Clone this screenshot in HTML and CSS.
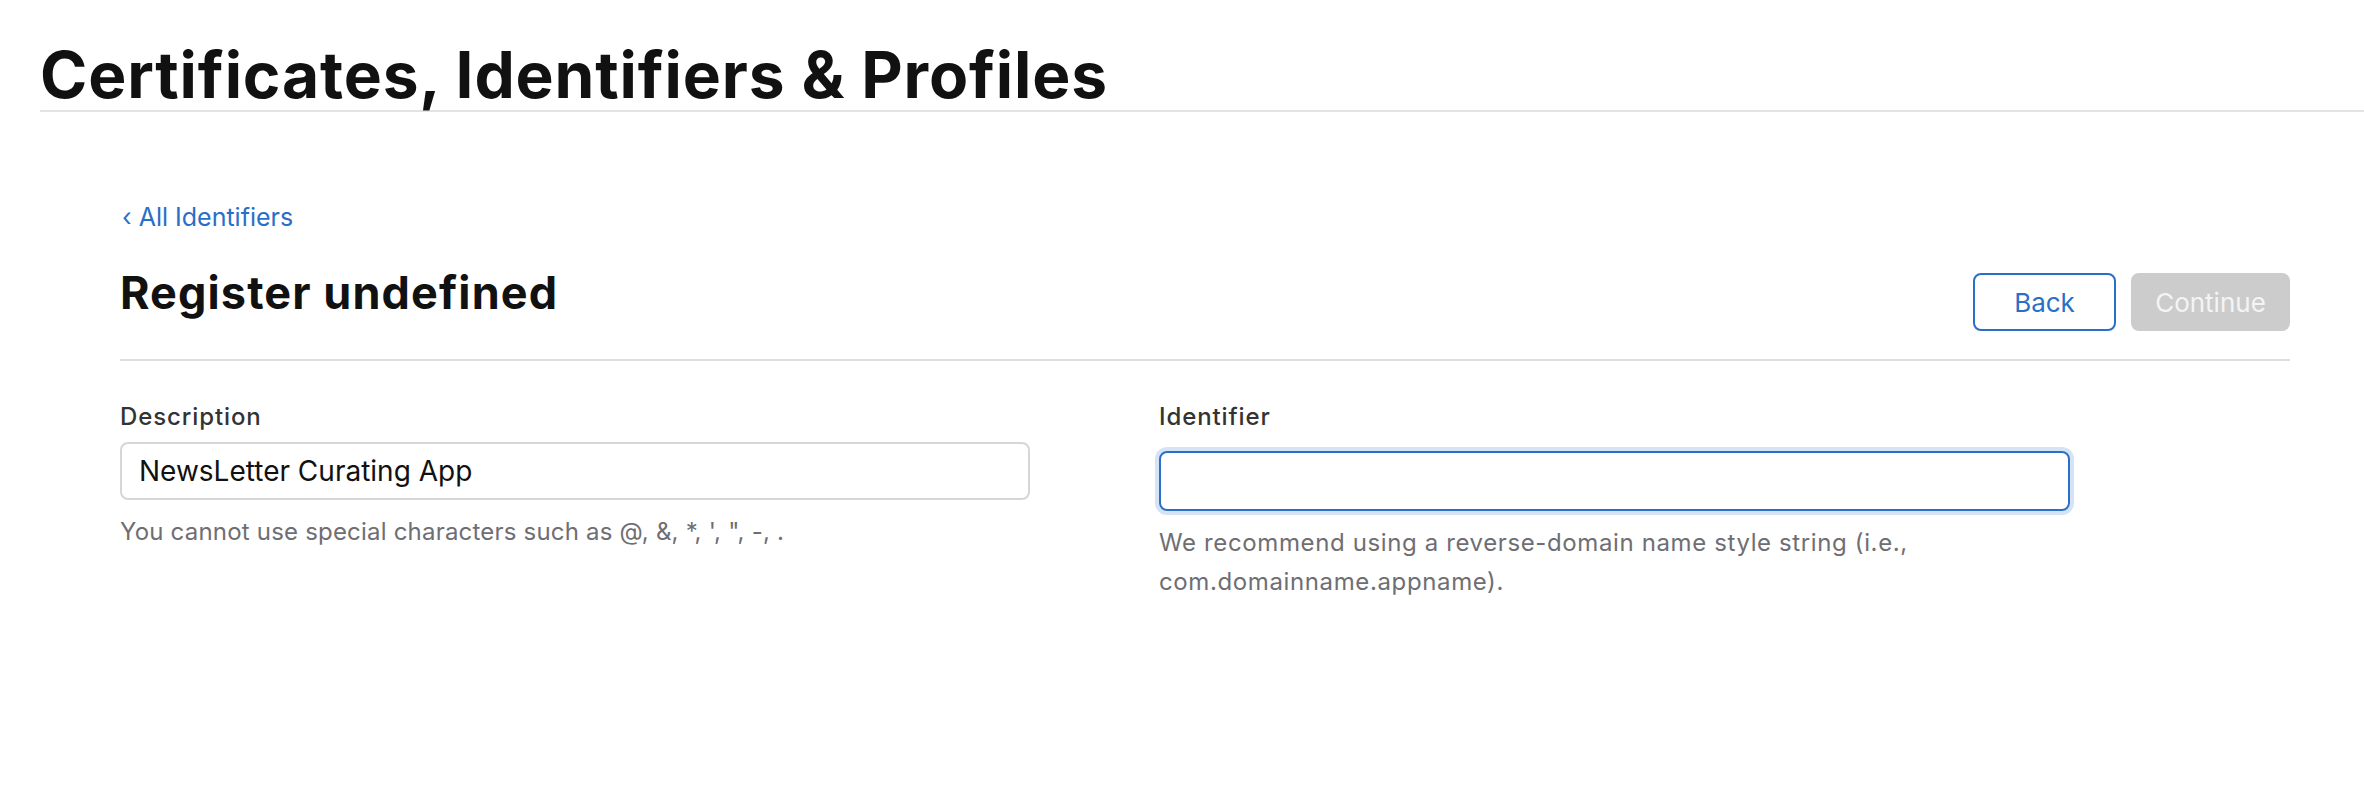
FILE: index.html
```html
<!DOCTYPE html>
<html lang="en">
<head>
<meta charset="utf-8">
<title>Certificates, Identifiers &amp; Profiles</title>
<link rel="stylesheet" href="styles.css">
</head>
<body>
<header class="page-header">
  <h1 class="page-title">Certificates, Identifiers &amp; Profiles</h1>
</header>
<main class="content">
  <a class="back-link" href="#"><span class="chev">‹</span> All Identifiers</a>
  <div class="title-row">
    <h2 class="section-title">Register undefined</h2>
    <div class="actions">
      <button class="btn btn-back" type="button">Back</button>
      <button class="btn btn-continue" type="button" disabled>Continue</button>
    </div>
  </div>
  <div class="form-grid">
    <div class="field">
      <label class="field-label">Description</label>
      <div class="input">NewsLetter Curating App</div>
      <p class="help">You cannot use special characters such as @, &amp;, *, ', ", -, .</p>
    </div>
    <div class="field">
      <label class="field-label">Identifier</label>
      <div class="input input-focus"></div>
      <p class="help help-wrap">We recommend using a reverse-domain name style string (i.e., com.domainname.appname).</p>
    </div>
  </div>
</main>
</body>
</html>
```
FILE: styles.css
```css
html, body {
  margin: 0;
  padding: 0;
  background: #ffffff;
}
body {
  font-family: Inter, "Noto Sans", sans-serif;
  color: #111111;
}
.page-header {
  margin-left: 40px;
  padding-top: 43px;
  padding-bottom: 3px;
  border-bottom: 2px solid #e3e3e3;
}
.page-title {
  margin: 0;
  font-size: 64px;
  line-height: 64px;
  font-weight: 700;
  letter-spacing: 0.85px;
  color: #111111;
}
.content {
  padding: 89px 74px 0 120px;
}
.back-link {
  display: block;
  font-size: 25px;
  line-height: 32px;
  color: #2a6fc7;
  text-decoration: none;
}
.chev {
  display: inline-block;
  margin-left: 2px;
}
.title-row {
  margin-top: 34px;
  display: flex;
  justify-content: space-between;
  align-items: flex-start;
  padding-bottom: 28px;
  border-bottom: 2px solid #dedede;
}
.section-title {
  margin: 0;
  font-size: 45px;
  line-height: 52px;
  font-weight: 700;
  letter-spacing: 1.1px;
  color: #111111;
}
.actions {
  display: flex;
  gap: 15px;
  margin-top: 6px;
}
.btn {
  height: 58px;
  border-radius: 8px;
  font-family: Inter, "Noto Sans", sans-serif;
  font-size: 26px;
  font-weight: 400;
  padding: 0;
  box-sizing: border-box;
}
.btn-back {
  width: 143px;
  background: #ffffff;
  border: 2px solid #2a6fc7;
  color: #2a6fc7;
}
.btn-continue {
  width: 159px;
  background: #cccccc;
  border: none;
  color: #f4f4f4;
}
.form-grid {
  display: grid;
  grid-template-columns: 1039px 1fr;
  padding-top: 41px;
}
.field {
  display: flex;
  flex-direction: column;
}
.field-label {
  font-size: 24px;
  line-height: 30px;
  font-weight: 500;
  letter-spacing: 0.9px;
  color: #333333;
}
.input {
  margin-top: 10px;
  width: 910px;
  height: 58px;
  box-sizing: border-box;
  border: 2px solid #d6d6d6;
  border-radius: 8px;
  padding: 0 17px;
  font-size: 28px;
  line-height: 54px;
  color: #111111;
}
.input-focus {
  margin-top: 19px;
  width: 911px;
  height: 60px;
  border-color: #2b6fc6;
  box-shadow: 0 0 0 4px #d5e3f4;
}
.help {
  margin: 12px 0 0 0;
  font-size: 24px;
  line-height: 39px;
  letter-spacing: 0.2px;
  color: #6e6e73;
}
.help-wrap {
  width: 910px;
  letter-spacing: 0.62px;
}
```
